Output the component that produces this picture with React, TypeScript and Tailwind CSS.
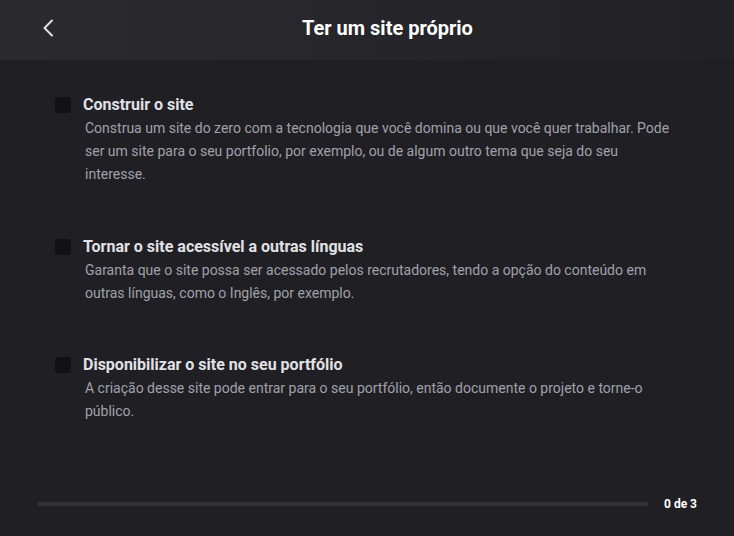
const tasks = [
  {
    title: 'Construir o site',
    description:
      'Construa um site do zero com a tecnologia que você domina ou que você quer trabalhar. Pode ser um site para o seu portfolio, por exemplo, ou de algum outro tema que seja do seu interesse.',
  },
  {
    title: 'Tornar o site acessível a outras línguas',
    description:
      'Garanta que o site possa ser acessado pelos recrutadores, tendo a opção do conteúdo em outras línguas, como o Inglês, por exemplo.',
  },
  {
    title: 'Disponibilizar o site no seu portfólio',
    description:
      'A criação desse site pode entrar para o seu portfólio, então documente o projeto e torne-o público.',
  },
];

function TaskItem({ title, description }: { title: string; description: string }) {
  return (
    <div className="flex items-start">
      <button className="mt-[2px] h-4 w-4 shrink-0 rounded-[3px] bg-[#121214]" aria-label={title} />
      <div className="ml-3">
        <h3 className="text-base leading-5 font-bold text-[#e1e1e6]">{title}</h3>
        <p className="mt-[2px] ml-[2px] w-[592px] text-sm leading-[23px] text-[#a0a0ab]">{description}</p>
      </div>
    </div>
  );
}

export default function App() {
  const done = 0;
  const progress = (done / tasks.length) * 100;

  return (
    <div
      className="flex h-[536px] w-[734px] flex-col bg-[#202024] text-white"
      style={{ fontFamily: 'Roboto, "Liberation Sans", sans-serif' }}
    >
      <header className="flex h-[60px] shrink-0 items-center bg-gradient-to-r from-[#2a2a2f] to-[#222226] pb-1 pl-[41px]">
        <button className="flex h-8 w-[14px] items-center justify-center" aria-label="Voltar">
          <svg width="14" height="18" viewBox="0 0 14 18" fill="none">
            <polyline
              points="11,1.5 3.5,9 11,16.5"
              stroke="#e1e1e6"
              strokeWidth="2"
              strokeLinecap="round"
              strokeLinejoin="round"
            />
          </svg>
        </button>
        <h1 className="ml-[247px] text-xl font-bold text-white">Ter um site próprio</h1>
      </header>

      <main className="flex flex-1 flex-col gap-[50.5px] pt-[35px] pl-[55px]">
        {tasks.map((task) => (
          <TaskItem key={task.title} {...task} />
        ))}
      </main>

      <footer className="flex items-center gap-4 pr-[37px] pb-[24px] pl-[37px]">
        <div className="h-1 flex-1 overflow-hidden rounded-full bg-[#323238]">
          <div className="h-full rounded-full bg-[#04d361]" style={{ width: `${progress}%` }} />
        </div>
        <span className="text-xs font-bold text-white">
          {done} de {tasks.length}
        </span>
      </footer>
    </div>
  );
}
